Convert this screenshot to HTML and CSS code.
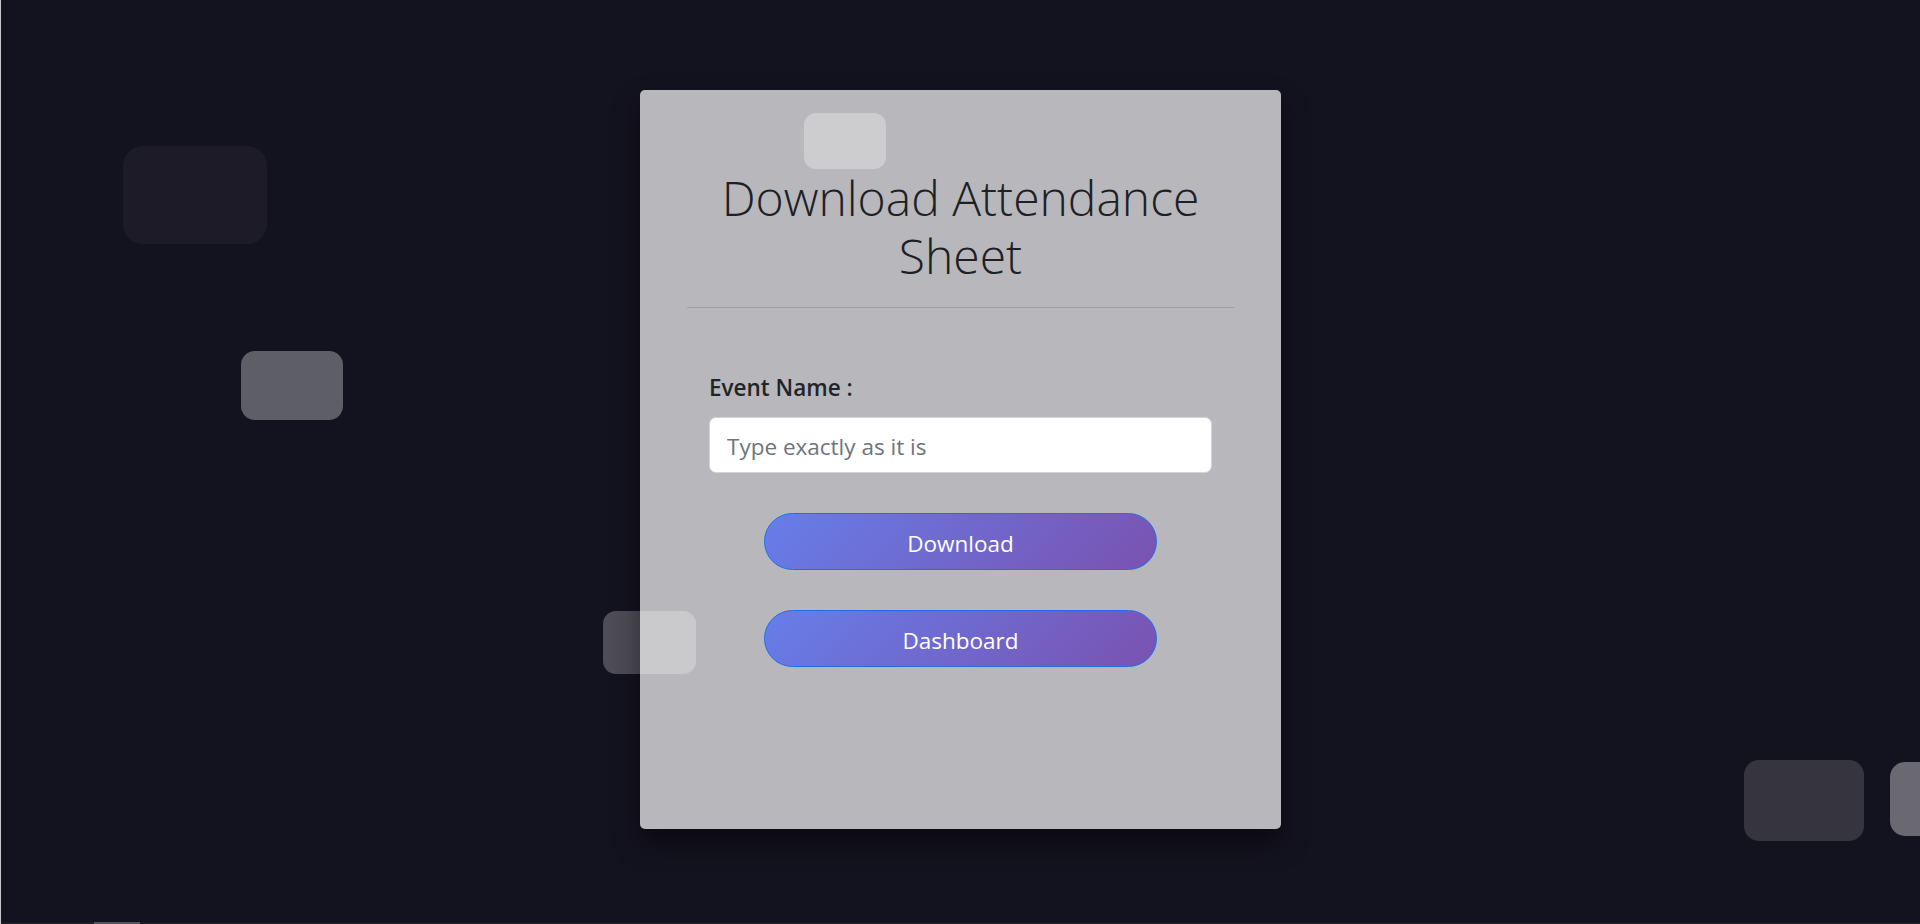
FILE: index.html
```html
<!DOCTYPE html>
<html lang="en">
<head>
<meta charset="utf-8">
<title>Download Attendance Sheet</title>
<link rel="stylesheet" href="styles.css">
</head>
<body>
<ul class="shapes">
  <li class="shape s1"></li>
  <li class="shape s2"></li>
  <li class="shape s3"></li>
  <li class="shape s4"></li>
  <li class="shape s5"></li>
  <li class="shape s6"></li>
</ul>
<main class="page">
  <section class="card">
    <h1 class="title">Download Attendance Sheet</h1>
    <hr class="rule">
    <form class="form">
      <label class="label" for="event">Event Name :</label>
      <input class="field" id="event" type="text" placeholder="Type exactly as it is">
      <button class="btn" type="button">Download</button>
      <button class="btn" type="button">Dashboard</button>
    </form>
  </section>
</main>
<div class="hscroll"><div class="hthumb"></div></div>
</body>
</html>
```
FILE: styles.css
```css
html, body {
  margin: 0;
  padding: 0;
}
html {
  background: #13121f;
}
body {
  height: 924px;
  overflow: hidden;
  border-left: 1px solid #c8c8cc;
  box-sizing: border-box;
  background: #13121f;
  font-family: "Open Sans", "Noto Sans", sans-serif;
  position: relative;
}
.shapes {
  position: absolute;
  inset: 0;
  margin: 0;
  padding: 0;
  list-style: none;
  overflow: hidden;
}
.shape {
  position: absolute;
  display: block;
  background: rgba(255, 255, 255, 0.3);
}
.s1 { left: 122px; top: 146px; width: 144px; height: 98px; border-radius: 20px; background: rgba(255,255,255,0.04); }
.s2 { left: 240px; top: 351px; width: 102px; height: 69px; border-radius: 14px; background: rgba(255,255,255,0.32); }
.s3 { left: 803px; top: 113px; width: 82px; height: 56px; border-radius: 12px; background: rgba(255,255,255,0.29); }
.s4 { left: 602px; top: 611px; width: 93px; height: 63px; border-radius: 13px; background: rgba(255,255,255,0.25); }
.s5 { left: 1743px; top: 760px; width: 120px; height: 81px; border-radius: 15px; background: rgba(255,255,255,0.145); }
.s6 { left: 1889px; top: 762px; width: 110px; height: 74px; border-radius: 15px; background: rgba(255,255,255,0.37); }

.page {
  position: relative;
  display: flex;
  justify-content: center;
  padding-top: 90px;
}
.card {
  width: 641px;
  height: 739px;
  box-sizing: border-box;
  padding: 0 47px;
  background: rgba(255, 255, 255, 0.7);
  border-radius: 5px;
  box-shadow: 0 14px 28px rgba(0, 0, 0, 0.45);
  display: flex;
  flex-direction: column;
}
.title {
  margin: 79px 0 0;
  font-size: 48px;
  line-height: 1.2;
  font-weight: 300;
  color: #1d2024;
  text-align: center;
}
.rule {
  margin: 23px 0 0;
  border: 0;
  border-top: 1px solid rgba(0, 0, 0, 0.12);
}
.form {
  display: flex;
  flex-direction: column;
  padding: 0 22px;
  margin-top: 63px;
}
.label {
  font-size: 22.5px;
  line-height: 33px;
  font-weight: 600;
  color: #212529;
}
.field {
  margin-top: 13px;
  height: 56px;
  box-sizing: border-box;
  padding: 2px 17px 0;
  border: 1px solid #ced4da;
  border-radius: 7px;
  background: #fff;
  font-family: inherit;
  font-size: 22.5px;
  color: #212529;
  outline: none;
}
.field::placeholder {
  color: #6c757d;
}
.btn {
  align-self: center;
  width: 393px;
  height: 57px;
  margin-top: 40px;
  padding: 3px 0 0;
  border: 1px solid #1a6ef0;
  border-radius: 29px;
  background: linear-gradient(135deg, #667eea 0%, #7a52b0 100%);
  color: #fff;
  font-family: inherit;
  font-size: 22.5px;
  cursor: pointer;
}
.hscroll {
  position: absolute;
  left: 0;
  right: 0;
  bottom: 0;
  height: 2px;
  background: #1e1e22;
}
.hthumb {
  position: absolute;
  left: 93px;
  width: 46px;
  height: 2px;
  background: #555558;
}
```
